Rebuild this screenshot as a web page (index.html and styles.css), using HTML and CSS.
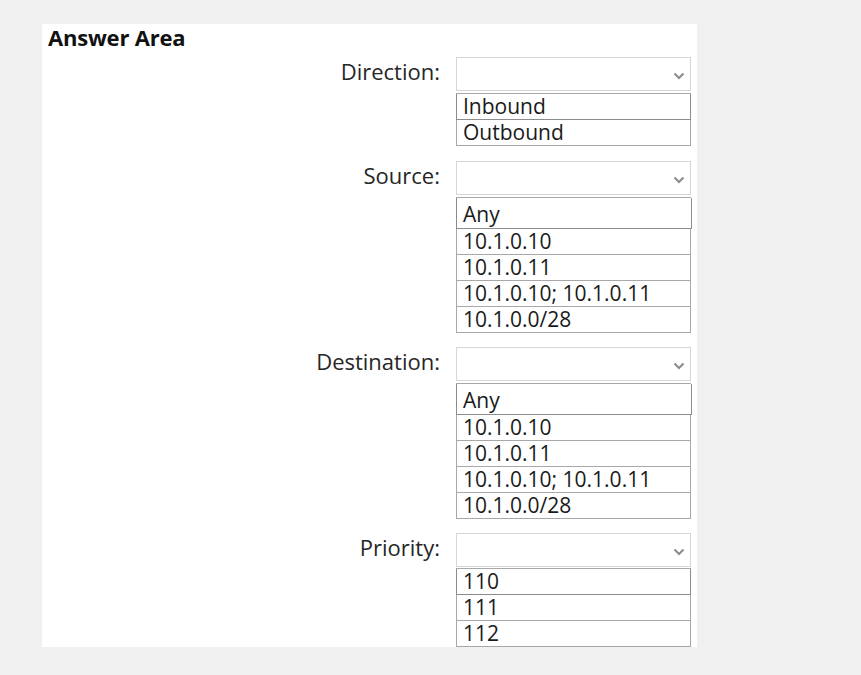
FILE: index.html
```html
<!DOCTYPE html>
<html lang="en">

<head>
    <meta charset="UTF-8">
    <title>Answer Area</title>
    <link rel="stylesheet" href="styles.css">
</head>

<body>
    <div class="panel">
        <h2 class="heading">Answer Area</h2>

        <!-- Direction -->
        <div class="group">
            <div class="label">Direction:</div>
            <div class="field">
                <div class="select">
                    <svg class="chevron" width="12" height="8" viewBox="0 0 12 8"><path d="M1.5 1.5 L6 6 L10.5 1.5" fill="none" stroke="#8a8a8a" stroke-width="2"/></svg>
                </div>
                <div class="options">
                    <div class="option first">Inbound</div>
                    <div class="option">Outbound</div>
                </div>
            </div>
        </div>

        <!-- Source -->
        <div class="group">
            <div class="label">Source:</div>
            <div class="field">
                <div class="select">
                    <svg class="chevron" width="12" height="8" viewBox="0 0 12 8"><path d="M1.5 1.5 L6 6 L10.5 1.5" fill="none" stroke="#8a8a8a" stroke-width="2"/></svg>
                </div>
                <div class="options">
                    <div class="option first tall">Any</div>
                    <div class="option">10.1.0.10</div>
                    <div class="option">10.1.0.11</div>
                    <div class="option">10.1.0.10; 10.1.0.11</div>
                    <div class="option">10.1.0.0/28</div>
                </div>
            </div>
        </div>

        <!-- Destination -->
        <div class="group">
            <div class="label">Destination:</div>
            <div class="field">
                <div class="select">
                    <svg class="chevron" width="12" height="8" viewBox="0 0 12 8"><path d="M1.5 1.5 L6 6 L10.5 1.5" fill="none" stroke="#8a8a8a" stroke-width="2"/></svg>
                </div>
                <div class="options">
                    <div class="option first tall">Any</div>
                    <div class="option">10.1.0.10</div>
                    <div class="option">10.1.0.11</div>
                    <div class="option">10.1.0.10; 10.1.0.11</div>
                    <div class="option">10.1.0.0/28</div>
                </div>
            </div>
        </div>

        <!-- Priority -->
        <div class="group">
            <div class="label">Priority:</div>
            <div class="field">
                <div class="select">
                    <svg class="chevron" width="12" height="8" viewBox="0 0 12 8"><path d="M1.5 1.5 L6 6 L10.5 1.5" fill="none" stroke="#8a8a8a" stroke-width="2"/></svg>
                </div>
                <div class="options short">
                    <div class="option first">110</div>
                    <div class="option">111</div>
                    <div class="option">112</div>
                </div>
            </div>
        </div>
    </div>
</body>

</html>
```

FILE: styles.css
```css
body {
    margin: 0;
    background-color: #f0f0f0;
    font-family: "Open Sans", "Noto Sans", sans-serif;
    color: #1e1e1e;
}

.panel {
    width: 655px;
    height: 623px;
    margin: 24px 0 0 42px;
    background-color: #fff;
    box-sizing: border-box;
}

.heading {
    margin: 0;
    padding: 0 0 0 6px;
    height: 33px;
    font-size: 22px;
    line-height: 26px;
    font-weight: 700;
    color: #111;
    letter-spacing: -0.2px;
}

.group {
    display: flex;
    margin-bottom: 14px;
}

.group:first-of-type {
    margin-bottom: 15px;
}

.label {
    width: 398px;
    padding-right: 16px;
    height: 34px;
    display: flex;
    align-items: center;
    justify-content: flex-end;
    font-size: 22px;
    color: #262626;
    margin-top: -3px;
}

.field {
    width: 235px;
}

.select {
    height: 34px;
    border: 1px solid #d6d6d6;
    box-sizing: border-box;
    display: flex;
    align-items: center;
    justify-content: flex-end;
    padding: 3px 5px 0 0;
}

.options {
    margin-top: 2px;
    border-top: 1px solid #a8a8a8;
}

.options.short {
    margin-top: 1px;
}

.option {
    height: 26px;
    box-sizing: border-box;
    border: 1px solid #a8a8a8;
    border-top: none;
    padding-left: 6px;
    font-size: 21px;
    line-height: 24px;
    color: #1a1a1a;
}

.option.first {
    border-color: #8c8c8c;
}

.option.tall {
    height: 31px;
    line-height: 32px;
    margin-right: -1px;
}
```
